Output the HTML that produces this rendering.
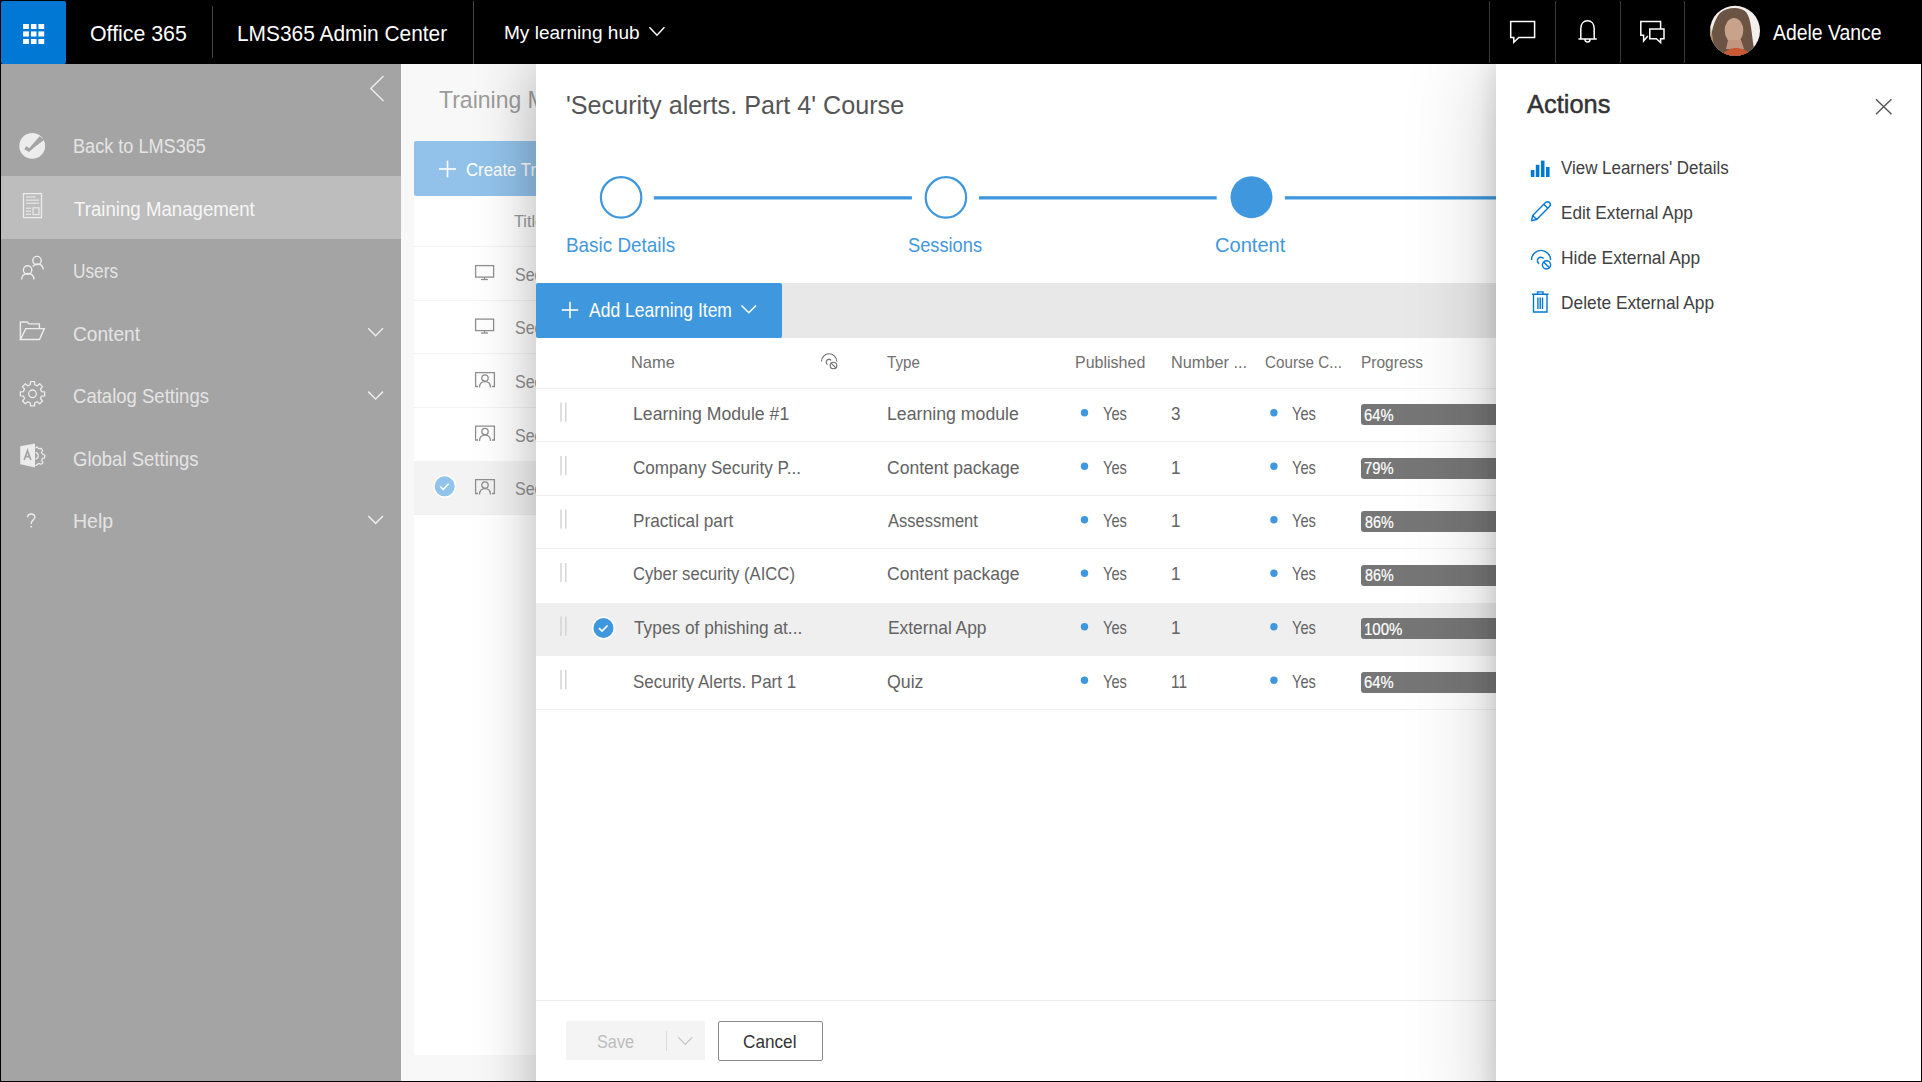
<!DOCTYPE html>
<html><head><meta charset="utf-8">
<style>
html,body{margin:0;padding:0;}
body{width:1922px;height:1082px;overflow:hidden;background:#000;font-family:"Liberation Sans",sans-serif;}
#root{position:relative;width:1922px;height:1082px;overflow:hidden;background:#000;}
.a{position:absolute;}
.t{position:absolute;white-space:pre;line-height:1;transform-origin:0 0;font-family:"Liberation Sans",sans-serif;}
svg{position:absolute;overflow:visible;}
#txt{position:absolute;left:0;top:0;width:1922px;height:1082px;z-index:20;}
</style></head><body><div id="root">

<!-- background page -->
<div class="a" style="left:401px;top:64px;width:1520px;height:1017px;background:#f8f8f8;z-index:1;">
  <!-- create button -->
  <div class="a" style="left:13px;top:77px;width:300px;height:54.5px;background:#92c2ea;border-radius:2px;"></div>
  <svg style="left:0;top:0" width="1" height="1"><g stroke="#fff" stroke-width="1.6"><line x1="38" y1="105" x2="55" y2="105"/><line x1="46.5" y1="96.6" x2="46.5" y2="113.3"/></g></svg>
  <!-- card -->
  <div class="a" style="left:13px;top:132px;width:1000px;height:859px;background:#fff;"></div>
  <!-- row lines -->
  <div class="a" style="left:13px;top:182px;width:300px;height:1px;background:#f3f3f3;"></div>
  <div class="a" style="left:13px;top:236px;width:300px;height:1px;background:#f3f3f3;"></div>
  <div class="a" style="left:13px;top:289px;width:300px;height:1px;background:#f3f3f3;"></div>
  <div class="a" style="left:13px;top:343px;width:300px;height:1px;background:#f3f3f3;"></div>
  <div class="a" style="left:13px;top:396.5px;width:300px;height:53px;background:#f3f3f3;"></div>
  <div class="a" style="left:13px;top:449.5px;width:300px;height:1px;background:#f0f0f0;"></div>
  <!-- row icons -->
  <svg style="left:0;top:0" width="1" height="1" fill="none" stroke="#8f8f8f" stroke-width="1.3">
    <g transform="translate(74,201)"><rect x="0.6" y="0.6" width="18" height="11.5"/><line x1="9.6" y1="12" x2="9.6" y2="14.5"/><line x1="6" y1="14.5" x2="13" y2="14.5"/></g>
    <g transform="translate(74,254.5)"><rect x="0.6" y="0.6" width="18" height="11.5"/><line x1="9.6" y1="12" x2="9.6" y2="14.5"/><line x1="6" y1="14.5" x2="13" y2="14.5"/></g>
    <g transform="translate(74,308)" id="pb"><path d="M3 14.5H0.6V0.6H19.4V14.5H17"/><circle cx="10" cy="6" r="3.2"/><path d="M4.5 15.5C4.5 11.5 7 9.6 10 9.6S15.5 11.5 15.5 15.5"/></g>
    <g transform="translate(74,361.5)"><path d="M3 14.5H0.6V0.6H19.4V14.5H17"/><circle cx="10" cy="6" r="3.2"/><path d="M4.5 15.5C4.5 11.5 7 9.6 10 9.6S15.5 11.5 15.5 15.5"/></g>
    <g transform="translate(74,415)"><path d="M3 14.5H0.6V0.6H19.4V14.5H17"/><circle cx="10" cy="6" r="3.2"/><path d="M4.5 15.5C4.5 11.5 7 9.6 10 9.6S15.5 11.5 15.5 15.5"/></g>
  </svg>
  <svg style="left:0;top:0" width="1" height="1">
    <circle cx="43.7" cy="422.3" r="10.8" fill="#92c3ea" stroke="#fff" stroke-width="1.5"/>
    <path d="M39.3 422.5l2.9 2.8l5.5-5.5" fill="none" stroke="#fff" stroke-width="1.6"/>
  </svg>
  <div class="a" style="left:-401px;top:-64px"><div class='t' style='left:439.00px;top:88.00px;font-size:24.5px;color:#9c9c9c;transform:scaleX(0.9384);'>Training Management</div>
<div class='t' style='left:465.59px;top:161.00px;font-size:18.5px;color:#fff;transform:scaleX(0.9074);'>Create Training</div>
<div class='t' style='left:513.80px;top:213.00px;font-size:16.5px;color:#999;transform:scaleX(0.9857);'>Title</div>
<div class='t' style='left:514.62px;top:266.00px;font-size:18.2px;color:#909090;transform:scaleX(0.8810);'>Security</div>
<div class='t' style='left:514.62px;top:319.00px;font-size:18.2px;color:#909090;transform:scaleX(0.8810);'>Security</div>
<div class='t' style='left:514.62px;top:373.00px;font-size:18.2px;color:#909090;transform:scaleX(0.8810);'>Security</div>
<div class='t' style='left:514.62px;top:427.00px;font-size:18.2px;color:#909090;transform:scaleX(0.8810);'>Security</div>
<div class='t' style='left:514.62px;top:480.00px;font-size:18.2px;color:#909090;transform:scaleX(0.8810);'>Security</div>
</div>
</div>

<!-- sidebar -->
<div class="a" style="left:1px;top:64px;width:400px;height:1017px;background:#a4a4a4;z-index:2;">
  <div class="a" style="left:0;top:112px;width:400px;height:63px;background:#bdbdbd;"></div>
  <svg style="left:-1px;top:-64px" width="1" height="1" fill="none" stroke="#ececec" stroke-width="1.5">
    <!-- collapse chevron -->
    <path d="M383.5 76L370.8 88.5L383.5 101"/>
    <!-- back to lms icon -->
    <circle cx="32.2" cy="145.9" r="12.9" fill="#ececec" stroke="none"/>
    <path d="M24.3 149.3L26.2 146.1L29.2 148.2L39.6 136.2L44.3 139.8L34 147.6L29.1 151.9Z" fill="#a4a4a4" stroke="none"/>
    <!-- doc icon -->
    <rect x="23.5" y="193.6" width="18" height="24" stroke-width="1.3"/>
    <g stroke-width="1.1"><line x1="26" y1="197" x2="35.5" y2="197"/><line x1="26" y1="200.1" x2="39" y2="200.1"/><line x1="26" y1="203.2" x2="39" y2="203.2"/>
    <line x1="26" y1="208.2" x2="31" y2="208.2"/><line x1="26" y1="211.2" x2="31" y2="211.2"/><line x1="26" y1="214.2" x2="31" y2="214.2"/>
    <rect x="33" y="207.8" width="6" height="6.8"/></g>
    <!-- users -->
    <g stroke-width="1.4"><circle cx="27.6" cy="270" r="4.2"/><path d="M21.5 279.5C21.8 275.5 24.4 273.5 27.8 273.5S33.8 275.5 34 279.5"/>
    <circle cx="37" cy="260.6" r="4.2"/><path d="M32.8 266.5C34 264.8 35.5 264 37.2 264C40.6 264 43 266.2 43.2 269.5"/></g>
    <!-- folder -->
    <g stroke-width="1.4"><path d="M20.4 339.5V322H27.2L29 323.9H39.4V328.6"/><path d="M20.4 339.5L25.8 328.6H44.3L39.5 339.5Z"/></g>
    <!-- gear -->
    <path stroke-width="1.3" stroke-linejoin="round" d="M30.26 384.77L30.48 381.67L34.52 381.67L34.74 384.77L37.30 385.83L39.65 383.79L42.51 386.65L40.47 389.00L41.53 391.56L44.63 391.78L44.63 395.82L41.53 396.04L40.47 398.60L42.51 400.95L39.65 403.81L37.30 401.77L34.74 402.83L34.52 405.93L30.48 405.93L30.26 402.83L27.70 401.77L25.35 403.81L22.49 400.95L24.53 398.60L23.47 396.04L20.37 395.82L20.37 391.78L23.47 391.56L24.53 389.00L22.49 386.65L25.35 383.79L27.70 385.83Z"/>
    <circle cx="32.5" cy="393.8" r="3.8" stroke-width="1.3"/>
    <!-- global settings -->
    <path d="M20.2 446.2L35 443.4V467.4L20.2 464.3Z" fill="#ececec" stroke="none"/>
    <path d="M24.2 460L27.5 450.6L30.8 460M25.4 456.6H29.6" stroke="#a4a4a4" stroke-width="1.7"/>
    <path stroke-width="1.2" d="M35.5 448.2l1.5-1.3l1.8 1.8l2.4-.4l1.3 2.2l-1 2.2l1.4 1.5l2 1.1l-.4 2.6l-2.2.5l-.6 2.2l1.3 2l-1.8 1.8l-2.2-.9l-2 1.1l-1.5 1.2" />
    <path stroke-width="1.2" d="M35.5 452.4a3.3 3.3 0 0 1 0 6.5"/>
    <!-- help ? -->
    <path stroke-width="1.4" d="M27.6 517.2C27.6 515.2 29.2 514 31.2 514S34.8 515.3 34.8 517.3C34.8 519.9 31.3 520 31.3 523.2V524"/>
    <circle cx="31.3" cy="526.7" r="0.9" fill="#ececec" stroke="none"/>
    <!-- chevrons -->
    <path d="M368.2 328.3L375.6 335.7L383 328.3"/>
    <path d="M368.2 391.6L375.6 399L383 391.6"/>
    <path d="M368.2 516L375.6 523.4L383 516"/>
  </svg>
</div>

<!-- modal -->
<div class="a" style="left:536px;top:64px;width:960px;height:1080px;background:#fff;z-index:3;box-shadow:0 0 56px rgba(0,0,0,0.3);">
  <svg style="left:-536px;top:-64px" width="1" height="1">
    <g fill="none" stroke="#3f98de">
      <circle cx="621.1" cy="197.4" r="20.2" stroke-width="2.2"/>
      <circle cx="945.9" cy="197.4" r="20.2" stroke-width="2.2"/>
    </g>
    <circle cx="1251.5" cy="197.2" r="21" fill="#3f98de"/>
    <g fill="#3f98de">
      <rect x="653.8" y="196.2" width="258.1" height="3.3"/>
      <rect x="979" y="196.2" width="237.7" height="3.3"/>
      <rect x="1284.9" y="196.2" width="220" height="3.3"/>
    </g>
  </svg>
  <!-- toolbar -->
  <div class="a" style="left:0;top:219px;width:960px;height:55px;background:#e8e8e8;"></div>
  <div class="a" style="left:0;top:219px;width:246px;height:54.5px;background:#3f98de;border-radius:2px;"></div>
  <svg style="left:-536px;top:-64px" width="1" height="1" fill="none" stroke="#fff" stroke-width="1.6">
    <line x1="561.8" y1="310" x2="578.2" y2="310"/><line x1="570" y1="301.8" x2="570" y2="318.2"/>
    <path d="M741.5 305.5L748.8 312.8L756 305.5" stroke-width="1.5"/>
  </svg>
  <!-- table lines -->
  <div class="a" style="left:0;top:324px;width:960px;height:1px;background:#efefef;"></div>
  <div class="a" style="left:0;top:377px;width:960px;height:1px;background:#f0f0f0;"></div>
  <div class="a" style="left:0;top:431px;width:960px;height:1px;background:#f0f0f0;"></div>
  <div class="a" style="left:0;top:484px;width:960px;height:1px;background:#f0f0f0;"></div>
  <div class="a" style="left:0;top:538.5px;width:960px;height:53px;background:#efefef;"></div>
  <div class="a" style="left:0;top:645px;width:960px;height:1px;background:#f0f0f0;"></div>
  <!-- hide icon header -->
  <svg style="left:-536px;top:-64px" width="1" height="1" fill="none" stroke="#6e6e6e" stroke-width="1.1">
    <g id="hideic"><path d="M821.4 361.5A7.7 7.7 0 0 1 836.8 361.5"/>
    <path d="M831.14 360.4A2.8 2.8 0 1 0 827.6 364.6"/>
    <circle cx="833.5" cy="365.5" r="3.3"/><line x1="831.2" y1="363.2" x2="835.8" y2="367.8"/></g>
  </svg>
  <!-- drag handles, dots -->
  <svg style="left:-536px;top:-64px" width="1" height="1">
    <g stroke="#cfcfcf" stroke-width="1.3">
      <path d="M561 402.5V421.7M565.8 402.5V421.7"/>
      <path d="M561 456V475.2M565.8 456V475.2"/>
      <path d="M561 509.5V528.7M565.8 509.5V528.7"/>
      <path d="M561 563V582.2M565.8 563V582.2"/>
      <path d="M561 616.5V635.7M565.8 616.5V635.7"/>
      <path d="M561 670V689.2M565.8 670V689.2"/>
    </g>
    <g fill="#3f98de">
      <circle cx="1084.5" cy="412.7" r="3.7"/><circle cx="1273.9" cy="412.7" r="3.7"/>
      <circle cx="1084.5" cy="466.2" r="3.7"/><circle cx="1273.9" cy="466.2" r="3.7"/>
      <circle cx="1084.5" cy="519.7" r="3.7"/><circle cx="1273.9" cy="519.7" r="3.7"/>
      <circle cx="1084.5" cy="573.2" r="3.7"/><circle cx="1273.9" cy="573.2" r="3.7"/>
      <circle cx="1084.5" cy="626.7" r="3.7"/><circle cx="1273.9" cy="626.7" r="3.7"/>
      <circle cx="1084.5" cy="680.2" r="3.7"/><circle cx="1273.9" cy="680.2" r="3.7"/>
    </g>
    <circle cx="603.5" cy="628" r="10.8" fill="#3f98de" stroke="#fff" stroke-width="1.5"/>
    <path d="M599 628.2l3 2.9l5.6-5.6" fill="none" stroke="#fff" stroke-width="1.7"/>
  </svg>
  <!-- progress bars -->
  <div class="a" style="left:825px;top:340.3px;width:200px;height:21px;background:#767676;border-radius:3px;"></div>
  <div class="a" style="left:825px;top:393.8px;width:200px;height:21px;background:#767676;border-radius:3px;"></div>
  <div class="a" style="left:825px;top:447.3px;width:200px;height:21px;background:#767676;border-radius:3px;"></div>
  <div class="a" style="left:825px;top:500.8px;width:200px;height:21px;background:#767676;border-radius:3px;"></div>
  <div class="a" style="left:825px;top:554.3px;width:200px;height:21px;background:#767676;border-radius:3px;"></div>
  <div class="a" style="left:825px;top:607.8px;width:200px;height:21px;background:#767676;border-radius:3px;"></div>
  <!-- footer -->
  <div class="a" style="left:0;top:936px;width:960px;height:1px;background:#ebebeb;"></div>
  <div class="a" style="left:30.2px;top:957.2px;width:138.8px;height:39.3px;background:#f4f4f4;border-radius:2px;"></div>
  <div class="a" style="left:129.5px;top:967px;width:1px;height:19.7px;background:#dcdcdc;"></div>
  <svg style="left:-536px;top:-64px" width="1" height="1" fill="none" stroke="#c4c4c4" stroke-width="1.2">
    <path d="M678.2 1037.2L685.3 1044.3L692.4 1037.2"/>
  </svg>
  <div class="a" style="left:181.5px;top:957px;width:103px;height:37.5px;border:1px solid #8a8a8a;border-radius:2px;"></div>
</div>

<!-- actions panel -->
<div class="a" style="left:1496px;top:64px;width:426px;height:1080px;background:#fff;z-index:4;box-shadow:0 0 24px rgba(0,0,0,0.14),0 0 84px rgba(0,0,0,0.22);">
  <svg style="left:-1496px;top:-64px" width="1" height="1" fill="none" stroke="#0078d4" stroke-width="1.4">
    <!-- close -->
    <path d="M1876 99.2L1891.5 114.2M1891.5 99.2L1876 114.2" stroke="#555" stroke-width="1.4"/>
    <!-- bar chart -->
    <g fill="#0078d4" stroke="none"><rect x="1530.8" y="170" width="3.6" height="7"/><rect x="1535.8" y="164.8" width="3.6" height="12.2"/><rect x="1540.9" y="160.6" width="3.6" height="16.4"/><rect x="1546" y="167" width="3.6" height="10"/></g>
    <!-- pencil -->
    <path d="M1531.6 220.6L1532.6 215.5L1545.5 202.6C1546.6 201.5 1548.4 201.5 1549.5 202.6C1550.6 203.7 1550.6 205.5 1549.5 206.6L1536.6 219.5Z M1543.8 204.3L1547.8 208.3 M1532.6 215.5L1536.6 219.5"/>
    <!-- hide -->
    <g transform="translate(1531.5,252.2) scale(1.24) translate(-821.4,-355.3)" stroke-width="1.15">
    <path d="M821.4 361.5A7.7 7.7 0 0 1 836.8 361.5"/>
    <path d="M831.14 360.4A2.8 2.8 0 1 0 827.6 364.6"/>
    <circle cx="833.5" cy="365.5" r="3.3"/><line x1="831.2" y1="363.2" x2="835.8" y2="367.8"/></g>
    <!-- trash -->
    <path d="M1532 294.3H1548.5 M1537.5 294.3V291.9H1543V294.3 M1533.5 294.3V312H1547V294.3 M1537.9 297.5V309 M1540.2 297.5V309 M1542.5 297.5V309"/>
  </svg>
</div>

<!-- top bar -->
<div class="a" style="left:0;top:0;width:1922px;height:64px;background:#000;z-index:10;">
  <div class="a" style="left:1px;top:1px;width:65px;height:63px;background:#0078d4;border-radius:2px;"></div>
  <svg style="left:0;top:0" width="1" height="1" fill="#fff">
    <rect x="23.1" y="24" width="5.8" height="5"/><rect x="30.9" y="24" width="5.6" height="5"/><rect x="38.4" y="24" width="5.8" height="5"/>
    <rect x="23.1" y="31.4" width="5.8" height="5.1"/><rect x="30.9" y="31.4" width="5.6" height="5.1"/><rect x="38.4" y="31.4" width="5.8" height="5.1"/>
    <rect x="23.1" y="39" width="5.8" height="5"/><rect x="30.9" y="39" width="5.6" height="5"/><rect x="38.4" y="39" width="5.8" height="5"/>
  </svg>
  <div class="a" style="left:212px;top:6px;width:1px;height:52px;background:#444;"></div>
  <div class="a" style="left:473px;top:1px;width:1px;height:63px;background:#444;"></div>
  <div class="a" style="left:1489px;top:1px;width:1px;height:62px;background:#3a3a3a;"></div>
  <div class="a" style="left:1554.5px;top:1px;width:1px;height:62px;background:#3a3a3a;"></div>
  <div class="a" style="left:1619.5px;top:1px;width:1px;height:62px;background:#3a3a3a;"></div>
  <div class="a" style="left:1684px;top:1px;width:1px;height:62px;background:#3a3a3a;"></div>
  <svg style="left:0;top:0" width="1" height="1" fill="none" stroke="#fff" stroke-width="1.5">
    <path d="M649.4 27.3L657 35.2L664.4 27.3"/>
    <!-- chat -->
    <path d="M1510.7 21.4H1534.6V37.4H1518.8L1513.8 42.2V37.4H1510.7Z"/>
    <!-- bell -->
    <path d="M1580.8 38.6V28.5C1580.8 23.8 1583.5 20.8 1587.5 20.8S1594.2 23.8 1594.2 28.5V38.6M1578.5 38.9H1596.8M1585 39.5A2.5 2.5 0 0 0 1590 39.5"/>
    <!-- double chat -->
    <path d="M1660.6 28.9V21.4H1640.8V35.3H1643.6V41L1647.8 36"/>
    <path d="M1649.8 29H1664V38.8H1660.6V42.6L1656.4 38.8H1649.8Z"/>
  </svg>
  <!-- avatar -->
  <svg style="left:0;top:0" width="1" height="1">
    <defs><clipPath id="av"><circle cx="1735" cy="30.8" r="25"/></clipPath>
    <radialGradient id="hair" cx="0.5" cy="0.45" r="0.6"><stop offset="0" stop-color="#8a6a58"/><stop offset="1" stop-color="#5d4636"/></radialGradient></defs>
    <g clip-path="url(#av)">
      <rect x="1705" y="0" width="60" height="60" fill="#f2efec"/>
      <path d="M1710 60C1709 42 1712 22 1720 13C1727 7 1740 6 1746 12C1752 19 1751 36 1756 60Z" fill="#6c5444"/>
      <path d="M1710 24C1713 34 1713 46 1716 58L1709 60Z" fill="#b7a07a" opacity="0.85"/>
      <ellipse cx="1734" cy="30.5" rx="9.3" ry="12.6" fill="#c8a28b"/>
      <path d="M1728 40L1741 40L1744 49L1726 49Z" fill="#c29580"/>
      <path d="M1719 60C1723 52 1729 48 1736 48C1743 48 1749 51 1754 60Z" fill="#c85a33"/>
    </g>
  </svg>
</div>

<div id="txt"><div class='t' style='left:90.05px;top:23.00px;font-size:22.46px;color:#fff;transform:scaleX(0.9500);'>Office 365</div>
<div class='t' style='left:237.34px;top:23.00px;font-size:21.74px;color:#fff;transform:scaleX(0.9610);'>LMS365 Admin Center</div>
<div class='t' style='left:503.60px;top:23.00px;font-size:18.99px;color:#fff;transform:scaleX(1.0037);'>My learning hub</div>
<div class='t' style='left:1773.00px;top:23.00px;font-size:21.45px;color:#fff;transform:scaleX(0.9042);'>Adele Vance</div>
<div class='t' style='left:73.13px;top:136.00px;font-size:20.72px;color:#e4e4e4;transform:scaleX(0.8742);'>Back to LMS365</div>
<div class='t' style='left:74.00px;top:199.00px;font-size:20.72px;color:#f6f6f6;transform:scaleX(0.9005);'>Training Management</div>
<div class='t' style='left:72.83px;top:262.00px;font-size:19.86px;color:#e4e4e4;transform:scaleX(0.8686);'>Users</div>
<div class='t' style='left:72.76px;top:324.00px;font-size:20.29px;color:#e4e4e4;transform:scaleX(0.9429);'>Content</div>
<div class='t' style='left:72.79px;top:386.00px;font-size:20.29px;color:#e4e4e4;transform:scaleX(0.9135);'>Catalog Settings</div>
<div class='t' style='left:72.81px;top:449.00px;font-size:20.87px;color:#e4e4e4;transform:scaleX(0.8879);'>Global Settings</div>
<div class='t' style='left:72.74px;top:511.00px;font-size:20.29px;color:#e4e4e4;transform:scaleX(0.9625);'>Help</div>
<div class='t' style='left:566.44px;top:92.00px;font-size:26.23px;color:#555;transform:scaleX(0.9595);'>'Security alerts. Part 4' Course</div>
<div class='t' style='left:566.00px;top:234.00px;font-size:21.01px;color:#3f98de;transform:scaleX(0.8992);'>Basic Details</div>
<div class='t' style='left:908.13px;top:234.00px;font-size:21.01px;color:#3f98de;transform:scaleX(0.8690);'>Sessions</div>
<div class='t' style='left:1215.44px;top:234.00px;font-size:21.01px;color:#3f98de;transform:scaleX(0.9562);'>Content</div>
<div class='t' style='left:588.60px;top:301.00px;font-size:19.42px;color:#fff;transform:scaleX(0.9013);'>Add Learning Item</div>
<div class='t' style='left:630.72px;top:355.00px;font-size:16.81px;color:#707070;transform:scaleX(0.9767);'>Name</div>
<div class='t' style='left:886.70px;top:355.00px;font-size:16.81px;color:#707070;transform:scaleX(0.9028);'>Type</div>
<div class='t' style='left:1075.45px;top:355.00px;font-size:16.81px;color:#707070;transform:scaleX(0.9528);'>Published</div>
<div class='t' style='left:1170.73px;top:355.00px;font-size:16.81px;color:#707070;transform:scaleX(0.9697);'>Number ...</div>
<div class='t' style='left:1265.30px;top:355.00px;font-size:16.81px;color:#707070;transform:scaleX(0.9048);'>Course C...</div>
<div class='t' style='left:1360.58px;top:355.00px;font-size:16.81px;color:#707070;transform:scaleX(0.9227);'>Progress</div>
<div class='t' style='left:632.88px;top:404.00px;font-size:19.28px;color:#636363;transform:scaleX(0.9172);'>Learning Module #1</div>
<div class='t' style='left:887.48px;top:404.00px;font-size:19.28px;color:#636363;transform:scaleX(0.9190);'>Learning module</div>
<div class='t' style='left:1102.50px;top:405.00px;font-size:18.55px;color:#636363;transform:scaleX(0.7900);'>Yes</div>
<div class='t' style='left:1171.38px;top:405.00px;font-size:18.55px;color:#636363;transform:scaleX(0.9222);'>3</div>
<div class='t' style='left:1291.70px;top:405.00px;font-size:18.55px;color:#636363;transform:scaleX(0.7900);'>Yes</div>
<div class='t' style='left:1363.59px;top:407.00px;font-size:16.23px;color:#fff;transform:scaleX(0.9097);-webkit-text-stroke:0.2px #fff;'>64%</div>
<div class='t' style='left:632.91px;top:458.00px;font-size:19.28px;color:#636363;transform:scaleX(0.8877);'>Company Security P...</div>
<div class='t' style='left:887.49px;top:458.00px;font-size:19.28px;color:#636363;transform:scaleX(0.9097);'>Content package</div>
<div class='t' style='left:1102.50px;top:459.00px;font-size:18.55px;color:#636363;transform:scaleX(0.7900);'>Yes</div>
<div class='t' style='left:1171.38px;top:459.00px;font-size:18.55px;color:#636363;transform:scaleX(0.9222);'>1</div>
<div class='t' style='left:1291.70px;top:459.00px;font-size:18.55px;color:#636363;transform:scaleX(0.7900);'>Yes</div>
<div class='t' style='left:1363.59px;top:460.00px;font-size:16.23px;color:#fff;transform:scaleX(0.9097);-webkit-text-stroke:0.2px #fff;'>79%</div>
<div class='t' style='left:632.91px;top:511.00px;font-size:19.28px;color:#636363;transform:scaleX(0.8929);'>Practical part</div>
<div class='t' style='left:888.40px;top:511.00px;font-size:19.28px;color:#636363;transform:scaleX(0.8562);'>Assessment</div>
<div class='t' style='left:1102.50px;top:512.00px;font-size:18.55px;color:#636363;transform:scaleX(0.7900);'>Yes</div>
<div class='t' style='left:1171.38px;top:512.00px;font-size:18.55px;color:#636363;transform:scaleX(0.9222);'>1</div>
<div class='t' style='left:1291.70px;top:512.00px;font-size:18.55px;color:#636363;transform:scaleX(0.7900);'>Yes</div>
<div class='t' style='left:1364.50px;top:514.00px;font-size:16.23px;color:#fff;transform:scaleX(0.8812);-webkit-text-stroke:0.2px #fff;'>86%</div>
<div class='t' style='left:632.94px;top:564.00px;font-size:19.28px;color:#636363;transform:scaleX(0.8645);'>Cyber security (AICC)</div>
<div class='t' style='left:887.49px;top:564.00px;font-size:19.28px;color:#636363;transform:scaleX(0.9097);'>Content package</div>
<div class='t' style='left:1102.50px;top:565.00px;font-size:18.55px;color:#636363;transform:scaleX(0.7900);'>Yes</div>
<div class='t' style='left:1171.38px;top:565.00px;font-size:18.55px;color:#636363;transform:scaleX(0.9222);'>1</div>
<div class='t' style='left:1291.70px;top:565.00px;font-size:18.55px;color:#636363;transform:scaleX(0.7900);'>Yes</div>
<div class='t' style='left:1364.50px;top:567.00px;font-size:16.23px;color:#fff;transform:scaleX(0.8812);-webkit-text-stroke:0.2px #fff;'>86%</div>
<div class='t' style='left:633.80px;top:618.00px;font-size:19.28px;color:#636363;transform:scaleX(0.8978);'>Types of phishing at...</div>
<div class='t' style='left:887.50px;top:618.00px;font-size:19.28px;color:#636363;transform:scaleX(0.9019);'>External App</div>
<div class='t' style='left:1102.50px;top:619.00px;font-size:18.55px;color:#636363;transform:scaleX(0.7900);'>Yes</div>
<div class='t' style='left:1171.38px;top:619.00px;font-size:18.55px;color:#636363;transform:scaleX(0.9222);'>1</div>
<div class='t' style='left:1291.70px;top:619.00px;font-size:18.55px;color:#636363;transform:scaleX(0.7900);'>Yes</div>
<div class='t' style='left:1363.58px;top:621.00px;font-size:16.23px;color:#fff;transform:scaleX(0.9250);-webkit-text-stroke:0.2px #fff;'>100%</div>
<div class='t' style='left:632.92px;top:672.00px;font-size:19.28px;color:#636363;transform:scaleX(0.8804);'>Security Alerts. Part 1</div>
<div class='t' style='left:887.48px;top:672.00px;font-size:19.28px;color:#636363;transform:scaleX(0.9211);'>Quiz</div>
<div class='t' style='left:1102.50px;top:673.00px;font-size:18.55px;color:#636363;transform:scaleX(0.7900);'>Yes</div>
<div class='t' style='left:1171.47px;top:673.00px;font-size:18.55px;color:#636363;transform:scaleX(0.8333);'>11</div>
<div class='t' style='left:1291.70px;top:673.00px;font-size:18.55px;color:#636363;transform:scaleX(0.7900);'>Yes</div>
<div class='t' style='left:1363.59px;top:674.00px;font-size:16.23px;color:#fff;transform:scaleX(0.9097);-webkit-text-stroke:0.2px #fff;'>64%</div>
<div class='t' style='left:597.34px;top:1033.00px;font-size:18.84px;color:#bdbdbd;transform:scaleX(0.8643);'>Save</div>
<div class='t' style='left:742.79px;top:1033.00px;font-size:18.84px;color:#333;transform:scaleX(0.9123);'>Cancel</div>
<div class='t' style='left:1527.00px;top:91.00px;font-size:26.67px;color:#333;transform:scaleX(0.9540);-webkit-text-stroke:0.5px #333;'>Actions</div>
<div class='t' style='left:1561.40px;top:158.00px;font-size:19.28px;color:#404040;transform:scaleX(0.8789);'>View Learners' Details</div>
<div class='t' style='left:1560.90px;top:203.00px;font-size:19.13px;color:#404040;transform:scaleX(0.8986);'>Edit External App</div>
<div class='t' style='left:1560.89px;top:248.00px;font-size:19.13px;color:#404040;transform:scaleX(0.9099);'>Hide External App</div>
<div class='t' style='left:1560.89px;top:293.00px;font-size:19.13px;color:#404040;transform:scaleX(0.9066);'>Delete External App</div>
</div>
<div class="a" style="left:1921px;top:0;width:1px;height:1082px;background:#000;z-index:30;"></div>
<div class="a" style="left:0;top:1081px;width:1922px;height:1px;background:#000;z-index:30;"></div>
<div class="a" style="left:0;top:0;width:1px;height:1082px;background:#000;z-index:30;"></div>
</div></body></html>
